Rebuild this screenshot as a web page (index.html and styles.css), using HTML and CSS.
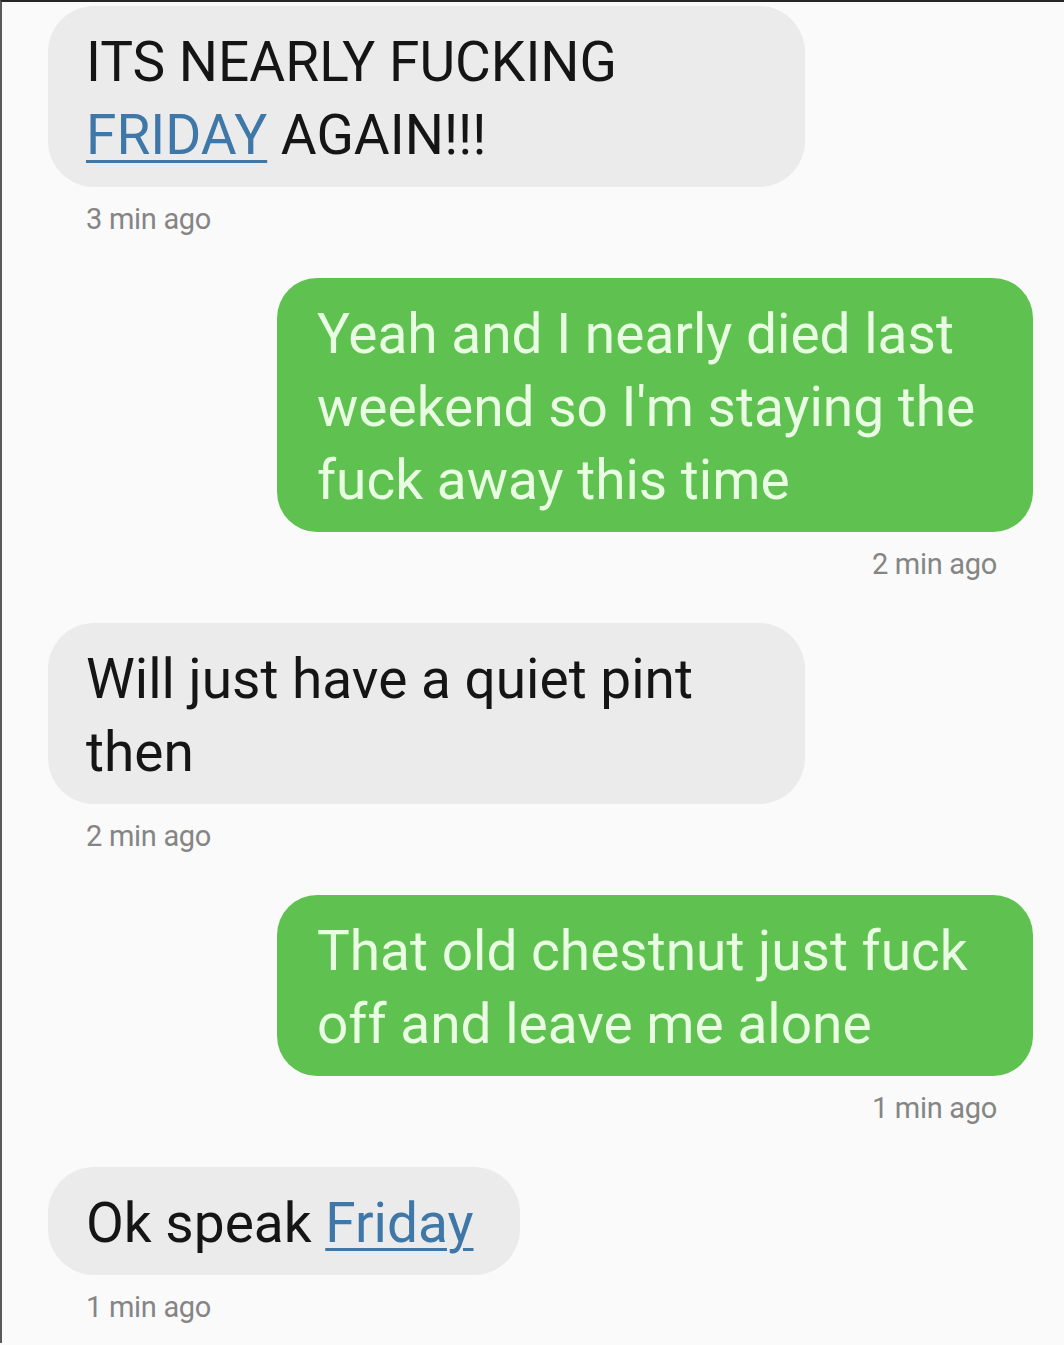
FILE: index.html
```html
<!DOCTYPE html>
<html lang="en">
<head>
<meta charset="utf-8">
<title>Messages</title>
<link rel="stylesheet" href="styles.css">
</head>
<body>
<div class="screen">
  <div class="thread">
    <div class="msg in">
      <div class="bubble">ITS NEARLY FUCKING <span class="link">FRIDAY</span> AGAIN!!!</div>
      <div class="time">3 min ago</div>
    </div>
    <div class="msg out">
      <div class="bubble">Yeah and I nearly died last weekend so I'm staying the fuck away this time</div>
      <div class="time">2 min ago</div>
    </div>
    <div class="msg in">
      <div class="bubble">Will just have a quiet pint then</div>
      <div class="time">2 min ago</div>
    </div>
    <div class="msg out">
      <div class="bubble">That old chestnut just fuck off and leave me alone</div>
      <div class="time">1 min ago</div>
    </div>
    <div class="msg in">
      <div class="bubble">Ok speak <span class="link">Friday</span></div>
      <div class="time">1 min ago</div>
    </div>
  </div>
</div>
</body>
</html>
```
FILE: styles.css
```css
html, body {
  margin: 0;
  padding: 0;
  background: #fafafa;
}

.screen {
  box-sizing: border-box;
  width: 1064px;
  height: 1343px;
  border-top: 2px solid #262626;
  border-left: 2px solid #5a5a5a;
  background: #fafafa;
  font-family: Roboto, "Liberation Sans", sans-serif;
}

.thread {
  display: flex;
  flex-direction: column;
  padding: 4px 31px 0 46px;
}

.msg {
  display: flex;
  flex-direction: column;
  margin-bottom: 42px;
}

.msg.in {
  align-items: flex-start;
}

.msg.out {
  align-items: flex-end;
}

.bubble {
  box-sizing: border-box;
  width: fit-content;
  max-width: 757px;
  padding: 20px 46px 15px 38px;
  font-size: 55px;
  line-height: 73px;
  border-radius: 46px;
}

.msg.in .bubble {
  background: #ebebeb;
  color: #151515;
}

.msg.out .bubble {
  max-width: 756px;
  padding-left: 40px;
  background: #5ec150;
  color: #e8fde2;
  border-radius: 40px;
}

.link {
  color: #3e77a8;
  text-decoration: underline;
  text-decoration-thickness: 3px;
  text-underline-offset: 6px;
}

.time {
  margin-top: 15px;
  font-size: 29px;
  line-height: 34px;
  color: #858585;
  letter-spacing: -0.3px;
}

.msg.in .time {
  padding-left: 38px;
}

.msg.out .time {
  padding-right: 36px;
}
```
